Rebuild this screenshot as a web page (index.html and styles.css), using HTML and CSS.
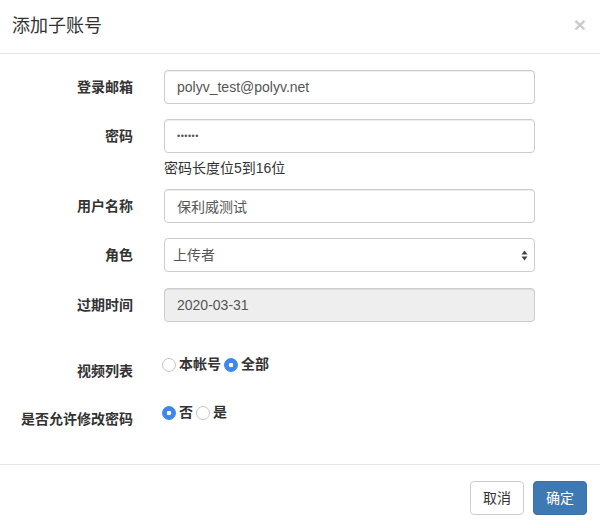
FILE: index.html
```html
<!DOCTYPE html>
<html lang="zh-CN">
<head>
    <meta charset="UTF-8">
    <meta name="viewport" content="width=device-width, initial-scale=1.0">
    <title>添加子账号</title>
    <link rel="stylesheet" href="styles.css">
</head>
<body>
    <div class="modal">
        <div class="modal-header">
            <h4 class="modal-title">添加子账号</h4>
            <button class="close" type="button">&times;</button>
        </div>

        <form class="modal-body">
            <div class="form-group">
                <label class="control-label">登录邮箱</label>
                <input class="form-control" type="text" value="polyv_test@polyv.net">
            </div>
            <div class="form-group with-help">
                <label class="control-label">密码</label>
                <div>
                    <input class="form-control" type="password" value="123456">
                    <div class="help-text">密码长度位5到16位</div>
                </div>
            </div>
            <div class="form-group">
                <label class="control-label">用户名称</label>
                <input class="form-control" type="text" value="保利威测试">
            </div>
            <div class="form-group select-group">
                <label class="control-label">角色</label>
                <div class="select-wrap">
                    <select class="form-control select">
                        <option>上传者</option>
                        <option>管理员</option>
                    </select>
                    <svg class="select-arrow" width="7" height="11" viewBox="0 0 7 11">
                        <path d="M3.5 0.5 L6.5 4.5 L0.5 4.5 Z" fill="#444"/>
                        <path d="M3.5 10.5 L6.5 6.5 L0.5 6.5 Z" fill="#444"/>
                    </svg>
                </div>
            </div>
            <div class="form-group">
                <label class="control-label">过期时间</label>
                <input class="form-control" type="text" value="2020-03-31" disabled>
            </div>

            <div class="form-group radio-group first-radio">
                <label class="control-label">视频列表</label>
                <div class="radios">
                    <label class="radio-inline"><input type="radio" name="videos">本帐号</label>
                    <label class="radio-inline"><input type="radio" name="videos" checked>全部</label>
                </div>
            </div>
            <div class="form-group radio-group">
                <label class="control-label">是否允许修改密码</label>
                <div class="radios">
                    <label class="radio-inline"><input type="radio" name="changePwd" checked>否</label>
                    <label class="radio-inline"><input type="radio" name="changePwd">是</label>
                </div>
            </div>
        </form>

        <div class="modal-footer">
            <button class="btn btn-default" type="button">取消</button>
            <button class="btn btn-primary" type="button">确定</button>
        </div>
    </div>
</body>
</html>
```

FILE: styles.css
```css
/* Base */
*, *:before, *:after {
    margin: 0;
    padding: 0;
    box-sizing: border-box;
}

body {
    font-family: "Liberation Sans", "Noto Sans CJK SC", sans-serif;
    font-size: 14px;
    line-height: 20px;
    color: #333;
    background-color: #fff;
}

.modal {
    width: 600px;
    background-color: #fff;
}

/* Header */
.modal-header {
    display: flex;
    justify-content: space-between;
    align-items: center;
    padding: 13px 14px 14px 12px;
    border-bottom: 1px solid #e5e5e5;
}

.modal-title {
    font-size: 18px;
    font-weight: normal;
    line-height: 26px;
    color: #333;
}

.close {
    background: none;
    border: none;
    font-family: "Liberation Sans", sans-serif;
    font-size: 21px;
    font-weight: bold;
    line-height: 1;
    color: #000;
    opacity: 0.2;
    margin-top: -4px;
    cursor: pointer;
}

/* Body */
.modal-body {
    display: flex;
    flex-direction: column;
    padding: 16px 0 14px;
}

.form-group {
    display: grid;
    grid-template-columns: 133px 371px;
    column-gap: 31px;
    margin-bottom: 15px;
}

.form-group.with-help {
    margin-bottom: 0;
}

.form-group.select-group {
    margin-bottom: 16px;
}

.control-label {
    padding-top: 7px;
    text-align: right;
    font-weight: bold;
    color: #333;
}

.form-control {
    display: block;
    width: 100%;
    height: 34px;
    padding: 6px 12px;
    font-family: inherit;
    font-size: 14px;
    line-height: 20px;
    color: #555;
    background-color: #fff;
    border: 1px solid #ccc;
    border-radius: 4px;
    box-shadow: inset 0 1px 1px rgba(0, 0, 0, 0.075);
    outline: none;
}

.form-control[type="password"] {
    font-size: 9px;
    letter-spacing: 0.5px;
}

.form-control[disabled] {
    background-color: #eee;
    color: #555;
    opacity: 1;
}

.help-text {
    margin: 5px 0 11px;
    color: #333;
}

/* Select */
.select-wrap {
    position: relative;
}

.select {
    appearance: none;
    -webkit-appearance: none;
    padding-left: 8px;
    box-shadow: none;
}

.select-arrow {
    position: absolute;
    top: 12px;
    right: 7px;
    pointer-events: none;
}

/* Radios */
.radio-group {
    min-height: 33px;
}

.radio-group.first-radio {
    margin-top: 17px;
}

.radios {
    display: flex;
    align-items: flex-start;
    margin-left: -2px;
    gap: 3px;
}

.radio-inline {
    display: flex;
    align-items: center;
    gap: 3px;
    font-weight: bold;
    color: #333;
    cursor: pointer;
}

.radio-inline input {
    appearance: none;
    -webkit-appearance: none;
    width: 14px;
    height: 14px;
    margin-top: 2px;
    border: 1px solid #c4c4c4;
    border-radius: 50%;
    background-color: #fff;
}

.radio-inline input:checked {
    border-color: #3d85f0;
    background: radial-gradient(circle, #fff 0 2px, #3d85f0 2.6px);
}

/* Footer */
.modal-footer {
    display: flex;
    justify-content: flex-end;
    gap: 9px;
    padding: 16px 13px 14px;
    border-top: 1px solid #e5e5e5;
}

.btn {
    padding: 6px 12px;
    font-family: inherit;
    font-size: 14px;
    line-height: 20px;
    border: 1px solid transparent;
    border-radius: 4px;
    cursor: pointer;
}

.btn-default {
    color: #333;
    background-color: #fff;
    border-color: #ccc;
}

.btn-primary {
    color: #fff;
    background-color: #3f79b4;
    border-color: #3a70a8;
}
```
